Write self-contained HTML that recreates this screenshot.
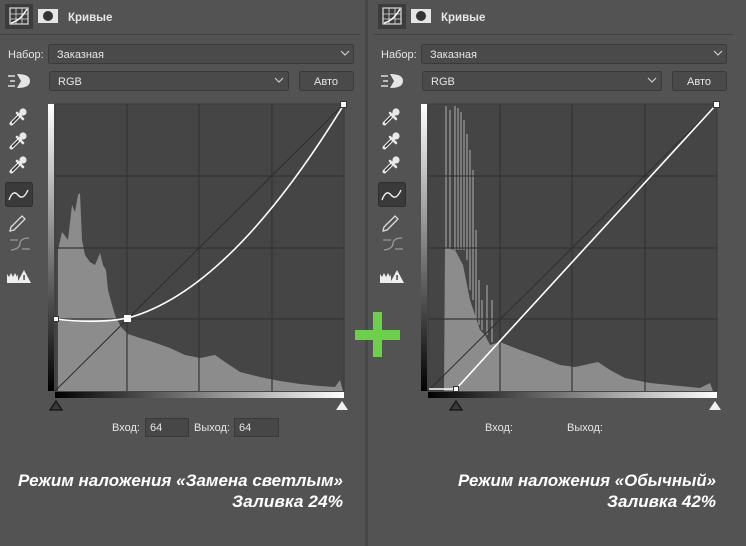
<!DOCTYPE html>
<html><head><meta charset="utf-8"><style>
html,body{margin:0;padding:0;background:#535353;}
body{width:746px;height:546px;overflow:hidden;position:relative;font-family:"Liberation Sans",sans-serif;}
svg{position:absolute;left:0;top:0;}
.t{font-family:"Liberation Sans",sans-serif;fill:#e6e6e6;font-size:11px;}
.cap{font-family:"Liberation Sans",sans-serif;font-style:italic;font-weight:bold;font-size:17px;fill:#fff;text-anchor:end;}
</style></head><body>
<svg width="746" height="546" viewBox="0 0 746 546">
<defs>
<linearGradient id="vg" x1="0" y1="0" x2="0" y2="1"><stop offset="0" stop-color="#fff"/><stop offset="1" stop-color="#000"/></linearGradient>
<linearGradient id="hg" x1="0" y1="0" x2="1" y2="0"><stop offset="0" stop-color="#000"/><stop offset="1" stop-color="#fff"/></linearGradient>
<g id="drop">
 <path d="M1.5 16.5 L10 8" stroke="#e8e8e8" stroke-width="4" stroke-linecap="round"/>
 <path d="M2.5 15.5 L8 10" stroke="#333" stroke-width="1.6" stroke-linecap="round"/>
 <path d="M7 6 L13 12" stroke="#e8e8e8" stroke-width="2.6" stroke-linecap="round"/>
 <circle cx="13" cy="5" r="3.6" fill="#e8e8e8"/>
 <path d="M9 9 L12 6" stroke="#e8e8e8" stroke-width="3"/>
</g>
<g id="chrome">
 <rect x="5" y="4" width="28" height="25" fill="#3c3c3c"/>
 <rect x="10" y="8" width="18" height="16" fill="none" stroke="#ddd" stroke-width="1.2"/>
 <path d="M10 14h18M10 19h18M16 8v16M22 8v16" stroke="#ddd" stroke-width="0.8"/>
 <path d="M11 23 Q20 21 27 9" stroke="#fff" stroke-width="1.4" fill="none"/>
 <rect x="38" y="9" width="20" height="14" fill="#e5e5e5"/>
 <circle cx="48" cy="16" r="5" fill="#333"/>
 <text x="68" y="21" class="t" style="font-weight:bold;font-size:11.5px">Кривые</text>
 <rect x="0" y="34" width="360" height="1" fill="#404040"/>
 <text x="8" y="58" class="t">Набор:</text>
 <rect x="48.5" y="44.5" width="305" height="19" rx="2" fill="#4a4a4a" stroke="#3a3a3a"/>
 <text x="57" y="58" class="t">Заказная</text>
 <path d="M341 51l4 4 4-4" stroke="#ccc" fill="none" stroke-width="1.2"/>
 <rect x="49.5" y="71.5" width="239" height="19" rx="2" fill="#4a4a4a" stroke="#3a3a3a"/>
 <text x="58" y="85" class="t">RGB</text>
 <path d="M275 78l4 4 4-4" stroke="#ccc" fill="none" stroke-width="1.2"/>
 <rect x="299.5" y="71.5" width="54" height="19" rx="2" fill="#4a4a4a" stroke="#3a3a3a"/>
 <text x="326" y="85" class="t" text-anchor="middle">Авто</text>
 <path d="M8 76h7M10 81h5M8 86h7" stroke="#ddd" stroke-width="1.6"/>
 <path d="M17 74 q13 0 13 7 q0 7 -13 7 l4 -7z" fill="#e5e5e5"/>
 <use href="#drop" x="10" y="107"/>
 <use href="#drop" x="10" y="131"/>
 <use href="#drop" x="10" y="155"/>
 <rect x="5.5" y="182.5" width="27" height="24" rx="2" fill="#3a3a3a" stroke="#2f2f2f"/>
 <path d="M9 200 Q13 189 18 195 Q23 201 28 190" stroke="#eee" stroke-width="1.4" fill="none"/>
 <path d="M11 227 l11 -11 3 3 -11 11 -4 1z" stroke="#ddd" stroke-width="1.3" fill="none"/>
 <path d="M10 240h8M22 249h8M11 250 Q20 249 20 243 Q21 238 29 238" stroke="#999" stroke-width="1.3" fill="none"/>
 <path d="M7 283v-9l2 3 2-4 2 4 2-4 2 4 1-3v9z" fill="#eee"/>
 <path d="M24 270 l7 13 h-14z" fill="#eee"/><rect x="23.4" y="275" width="1.3" height="5" fill="#333"/>
 <rect x="48" y="104" width="6" height="287" fill="url(#vg)"/>
 <rect x="55" y="392" width="289" height="6" fill="url(#hg)"/>
 <rect x="55" y="104" width="289" height="287" fill="#454545" stroke="#3a3a3a"/>
 <text x="112" y="431" class="t" fill="#ccc">Вход:</text>
 <text x="194" y="431" class="t" fill="#ccc">Выход:</text>
</g>
<g id="grid" stroke="#353535" stroke-width="1.2" fill="none">
 <path d="M127 104v287M199 104v287M272 104v287M55 176h289M55 248h289M55 319h289"/>
</g>
</defs>

<use href="#chrome"/>
<polygon fill="#8c8c8c" points="58,391 58,250 62,232 68,240 72,205 75,212 78,195 80,193 82,240 85,255 90,262 95,265 98,258 100,253 103,265 106,270 108,290 112,305 116,318 122,328 128,334 140,338 150,341 170,348 185,355 200,358 215,355 225,362 240,372 260,377 280,381 300,384 320,386 335,387 340,380 343,391"/>
<use href="#grid"/>
<line x1="55" y1="391" x2="344" y2="104" stroke="#2e2e2e" stroke-width="1"/>
<path d="M56 319 Q95 324 128 318 Q230 290 343 106" stroke="#fff" stroke-width="1.6" fill="none"/>
<rect x="53.5" y="316.5" width="5" height="5" fill="#fff" stroke="#333"/>
<rect x="124" y="315" width="7" height="7" fill="#fff"/>
<rect x="340.5" y="101.5" width="6" height="6" fill="#fff" stroke="#333"/>
<path d="M50 410 L56 401 L62 410 Z" fill="#3a3a3a" stroke="#111" stroke-width="1.2"/>
<path d="M336 410 L342 401 L348 410 Z" fill="#f0f0f0"/>
<rect x="145.5" y="418.5" width="43" height="18" fill="#474747" stroke="#3a3a3a"/>
<text x="150" y="431" class="t">64</text>
<rect x="234.5" y="418.5" width="44" height="18" fill="#474747" stroke="#3a3a3a"/>
<text x="239" y="431" class="t">64</text>

<rect x="365" y="0" width="3" height="546" fill="#474747"/>

<g transform="translate(373,0)"><use href="#chrome"/></g>
<polygon fill="#8c8c8c" points="444,391 445,248 455,250 463,265 470,300 480,330 485,335 490,345 500,342 520,350 540,357 560,365 575,367 598,362 610,370 625,378 650,383 680,386 700,388 710,383 713,391"/>
<g stroke="#8c8c8c" stroke-width="1.5">
<path d="M446 250V106M450 250V110M455 250V106M458 250V108M461 250V112M464 250V120M467 260V134M470 290V150M473 300V170M476 320V230M479 325V280M482 330V300M487 335V285M492 342V300"/>
</g>
<g transform="translate(373,0)"><use href="#grid"/></g>
<line x1="428" y1="391" x2="717" y2="104" stroke="#2e2e2e" stroke-width="1"/>
<path d="M429 389 L456 389 L716 105" stroke="#fff" stroke-width="1.6" fill="none"/>
<rect x="453.5" y="386.5" width="5" height="5" fill="#fff" stroke="#333"/>
<rect x="713.5" y="101.5" width="6" height="6" fill="#fff" stroke="#333"/>
<path d="M450 410 L456 401 L462 410 Z" fill="#3a3a3a" stroke="#111" stroke-width="1.2"/>
<path d="M709 410 L715 401 L721 410 Z" fill="#f0f0f0"/>

<rect x="355" y="330" width="45" height="10" fill="#6cd04a"/>
<rect x="373" y="312" width="9" height="45" fill="#6cd04a"/>

<text x="343" y="486" class="cap" textLength="325" lengthAdjust="spacingAndGlyphs">Режим наложения «Замена светлым»</text>
<text x="343" y="507" class="cap" textLength="111" lengthAdjust="spacingAndGlyphs">Заливка 24%</text>
<text x="716" y="486" class="cap" textLength="258" lengthAdjust="spacingAndGlyphs">Режим наложения «Обычный»</text>
<text x="716" y="507" class="cap" textLength="109" lengthAdjust="spacingAndGlyphs">Заливка 42%</text>
</svg>
</body></html>
